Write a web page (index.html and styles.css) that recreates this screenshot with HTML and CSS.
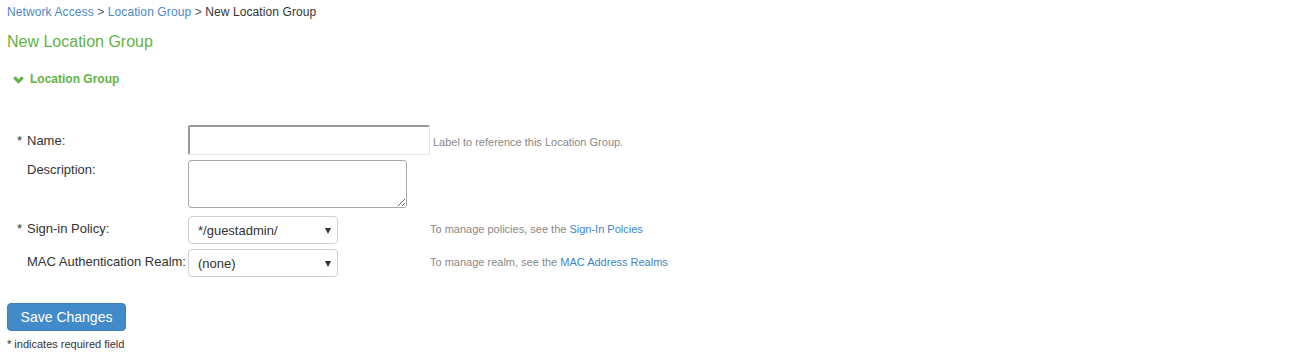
FILE: index.html
```html
<!DOCTYPE html>
<html lang="en">
<head>
<meta charset="utf-8">
<title>New Location Group</title>
<link rel="stylesheet" href="styles.css">
</head>
<body>
<div class="page">
  <div class="crumbs"><a class="crumb-link" href="#">Network Access</a> &gt; <a class="crumb-link" href="#">Location Group</a> &gt; <span class="crumb-current">New Location Group</span></div>
  <h1 class="title">New Location Group</h1>
  <div class="section-head">
    <svg class="chevron" width="11" height="8" viewBox="0 0 11 8"><path d="M0.2 2.4 L2.4 0.2 L5.5 3.3 L8.6 0.2 L10.8 2.4 L5.5 7.7 Z" fill="#62b346"/></svg>
    <span>Location Group</span>
  </div>

  <div class="form">
    <div class="row row-name">
      <div class="label"><span class="req">*</span>Name:</div>
      <input class="text-input" type="text">
      <div class="help help-inline">Label to reference this Location Group.</div>
    </div>
    <div class="row row-desc">
      <div class="label label-top"><span class="req"></span>Description:</div>
      <textarea class="textarea"></textarea>
    </div>
    <div class="row row-select">
      <div class="label label-select"><span class="req">*</span>Sign-in Policy:</div>
      <div class="field">
        <div class="select"><span>*/guestadmin/</span><span class="caret"></span></div>
      </div>
      <div class="help help-select">To manage policies, see the <a class="help-link" href="#">Sign-In Polcies</a></div>
    </div>
    <div class="row row-select row-mac">
      <div class="label label-select"><span class="req"></span>MAC Authentication Realm:</div>
      <div class="field">
        <div class="select"><span class="select-text-low">(none)</span><span class="caret"></span></div>
      </div>
      <div class="help help-select">To manage realm, see the <a class="help-link" href="#">MAC Address Realms</a></div>
    </div>
  </div>

  <button class="btn" type="button">Save Changes</button>
  <div class="note">* indicates required field</div>
</div>
</body>
</html>
```

FILE: styles.css
```css
* { box-sizing: border-box; }
html, body { margin: 0; padding: 0; background: #fff; }
body {
  font-family: "Liberation Sans", Arial, sans-serif;
  color: #333;
}
.page { padding-left: 7px; }

.crumbs {
  padding-top: 4px;
  font-size: 12px;
  line-height: 16px;
  letter-spacing: 0.1px;
  color: #555;
}
.crumb-link { color: #4d88c7; text-decoration: none; }
.crumb-current { color: #333; }

.title {
  margin: 12px 0 0 0;
  font-size: 16px;
  line-height: 20px;
  font-weight: normal;
  color: #62b346;
}

.section-head {
  margin-top: 19px;
  margin-left: 6px;
  display: flex;
  align-items: center;
  gap: 6px;
  font-size: 12px;
  line-height: 16px;
  font-weight: bold;
  color: #62b346;
}
.chevron { display: block; margin-top: 1px; }

.form { margin-top: 38px; }
.row { display: flex; align-items: flex-start; }
.row-desc { margin-top: 5px; }
.row-select { margin-top: 8px; }
.row-mac { margin-top: 5px; }

.label {
  width: 181px;
  flex: none;
  padding-left: 10px;
  font-size: 13px;
  line-height: 15px;
  color: #333;
  display: flex;
  white-space: nowrap;
}
.row-name .label { align-self: center; }
.label-top { padding-top: 2px; }
.label-select { padding-top: 5px; }
.req { width: 10px; flex: none; }

.text-input {
  width: 242px;
  height: 30px;
  margin: 0;
  padding: 2px 6px;
  font: 13px "Liberation Sans", Arial, sans-serif;
  border-style: solid;
  border-width: 2px 1px 1px 2px;
  border-color: #9a9a9a #e6e6e6 #e6e6e6 #9a9a9a;
  border-radius: 2px;
  background: #fff;
  flex: none;
}
.textarea {
  width: 219px;
  height: 48px;
  margin: 0;
  border: 1px solid #a9a9a9;
  border-radius: 3px;
  font: 13px "Liberation Sans", Arial, sans-serif;
  display: block;
  flex: none;
}

.field { width: 242px; flex: none; }
.select {
  width: 150px;
  height: 28px;
  border: 1px solid #cfcfcf;
  border-radius: 4px;
  padding: 0 6px 0 9px;
  display: flex;
  align-items: center;
  justify-content: space-between;
  font-size: 13px;
  line-height: 15px;
  color: #333;
  background: #fff;
}
.select-text-low { padding-top: 1px; }
.caret {
  width: 0;
  height: 0;
  border-left: 3px solid transparent;
  border-right: 3px solid transparent;
  border-top: 6px solid #333;
  margin-top: 2px;
}

.help {
  font-size: 11px;
  line-height: 13px;
  color: #888;
  white-space: nowrap;
}
.help-inline { margin-left: 3px; margin-top: 11px; }
.help-select { margin-top: 7px; }
.help-link { color: #3c84c6; text-decoration: none; }

.btn {
  display: block;
  margin-top: 26px;
  width: 119px;
  height: 28px;
  padding: 0;
  background: #428bca;
  border: 1px solid #3a80c0;
  border-radius: 4px;
  color: #fff;
  font: 14px/26px "Liberation Sans", Arial, sans-serif;
  text-align: center;
  cursor: pointer;
}

.note {
  margin-top: 7px;
  font-size: 11px;
  line-height: 13px;
  color: #333;
}
```
